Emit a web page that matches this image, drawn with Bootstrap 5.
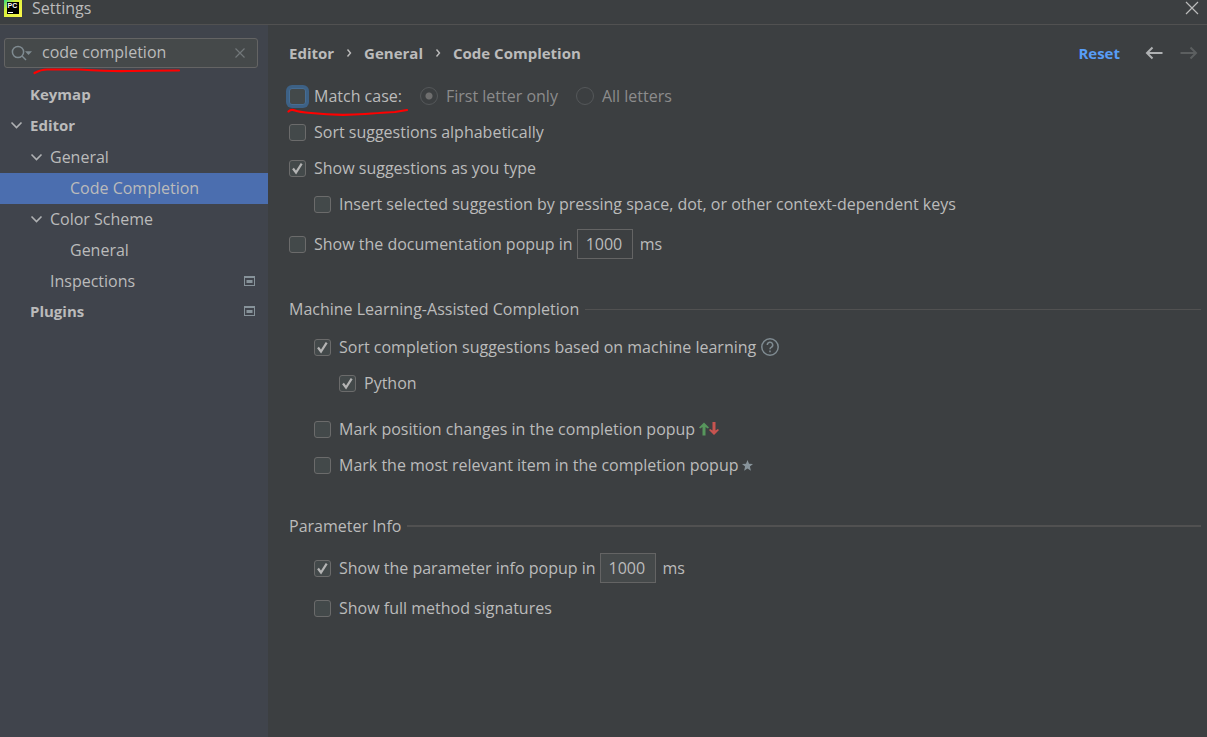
<!DOCTYPE html>
<html lang="en" data-bs-theme="dark">
<head>
<meta charset="utf-8">
<meta name="viewport" content="width=device-width, initial-scale=1">
<title>Settings</title>
<link href="https://cdn.jsdelivr.net/npm/bootstrap@5.3.0/dist/css/bootstrap.min.css" rel="stylesheet">
<style>
  :root { --ink: #bbbbbb; --panel: #3c3f41; --side: #40444c; --field: #45494a; --line: #515151; --edge: #646464; }
  body { background: var(--panel); color: var(--ink); font-family: "Open Sans", "Noto Sans", sans-serif; font-size: 16px; line-height: 22px; }
  a { color: inherit; text-decoration: none; }
  svg { display: block; flex: none; }
  .fw-bold { font-size: 15px; }

  .titlebar { height: 25px; border-bottom: 1px solid var(--line); padding: 0 8px 8px 4px; gap: 10px; line-height: 16px; }
  .icon-btn { background: none; border: 0; padding: 0; color: inherit; }

  .sidebar { width: 268px; background: var(--side); padding-top: 13px; }
  .search { height: 30px; margin: 0 10px 12px 4px; padding: 0 11px 0 6px; background: var(--field); border: 1px solid var(--edge); border-radius: 3px; }
  .search input { background: none; border: 0; outline: 0; padding: 0 0 2px 1px; color: var(--ink); min-width: 0; }
  .tree-row { height: 31px; padding: 0 13px 2px 10px; gap: 7px; }
  .tree-row.fw-bold { padding-bottom: 4px; }
  .tree-row.level-2 { padding-left: 30px; }
  .tree-row.level-3 { padding-left: 50px; }
  .tree-row.selected { background: #4b6eaf; }
  .twig { width: 13px; flex: none; }

  .content-pane { padding: 12px 6px 0 21px; }
  .crumbs { height: 32px; }
  .page-head { padding-right: 3px; margin-bottom: 9px; }
  .crumbs svg { margin: 0 12px; }
  .reset { color: #589df6; }

  .opt { height: 36px; }
  .opt.tall { height: 44px; }
  .indent-1 { padding-left: 25px; }
  .indent-2 { padding-left: 50px; }
  .opt label { margin-left: 8px; }
  .radio-pair { margin-left: 18px; }
  .opt .form-check-input { width: 17px; height: 17px; margin: 0; flex: none; background-color: #43494a; border: 1px solid #6b6b6b; border-radius: 3px; opacity: 1; }
  .opt .form-check-input[type=checkbox]:checked { background-size: 17px 17px; background-image: url("data:image/svg+xml,%3Csvg xmlns='http://www.w3.org/2000/svg' viewBox='0 0 17 17'%3E%3Cpath d='M4 8.5l3 4L12.7 3.6' fill='none' stroke='%23b4b4b4' stroke-width='2.2'/%3E%3C/svg%3E"); }
  .opt .form-check-input:focus { border-color: #466d94; box-shadow: 0 0 0 3px #3d6185; }
  .opt .form-check-input[type=radio] { width: 18px; height: 18px; border-color: #55585a; background-color: var(--panel); border-radius: 50%; }
  .opt .form-check-input[type=radio]:checked { background-image: radial-gradient(circle, #6e6e6e 3px, transparent 4px); }
  .opt .form-check-input:disabled ~ label { opacity: 1; color: #8c8c8c; }
  .ms-field { width: 56px; height: 30px; margin: 0 7px 0 4px; padding: 0 0 0 8px; background: var(--panel); border: 1px solid var(--edge); border-radius: 0; color: var(--ink); }
  .ms-field.live { background: var(--field); }
  .section-title { height: 30px; gap: 6px; }
  .section-title h2 { font-size: 16px; line-height: 22px; font-weight: 400; margin: 0; color: var(--ink); }
  .rule { height: 1px; background: var(--line); }
  .rule.thick { height: 2px; }
  .group-body { padding-top: 5px; }
  .marks { padding-top: 10px; }
  .scribble { position: absolute; pointer-events: none; }
</style>
</head>
<body class="d-flex flex-column min-vh-100">
<header class="titlebar d-flex align-items-center">
  <svg width="18" height="18" viewBox="0 0 18 18" aria-hidden="true">
    <defs><linearGradient id="pc" x1="0" y1="0" x2="1" y2="1"><stop offset="0" stop-color="#21d789"/><stop offset=".35" stop-color="#d8f03c"/><stop offset="1" stop-color="#fcf84a"/></linearGradient></defs>
    <rect width="18" height="18" fill="url(#pc)"/><rect x="3" y="3" width="12" height="12" fill="#000"/>
    <text x="3.5" y="9" font-family="Liberation Sans" font-weight="700" font-size="7" fill="#fff">PC</text><rect x="4" y="13" width="5" height="1" fill="#fff"/>
  </svg>
  <span>Settings</span>
  <button class="icon-btn ms-auto" aria-label="Close"><svg width="14" height="14" viewBox="0 0 14 14" stroke="#bbb" stroke-width="1.2"><path d="M1 1l12 12M13 1L1 13"/></svg></button>
</header>

<div class="d-flex flex-grow-1">
  <aside class="sidebar flex-shrink-0">
    <div class="search d-flex align-items-center position-relative">
      <svg width="22" height="18" viewBox="0 0 22 18" fill="none" stroke="#7f8b91" stroke-width="1.5"><circle cx="7" cy="8" r="5.6"/><path d="M11 12l4 4"/><path d="M14 7.2h7L17.5 11z" fill="#7f8b91" stroke="none"/></svg>
      <input class="flex-grow-1 ms-2" type="text" value="code completion" aria-label="Search settings">
      <button class="icon-btn" aria-label="Clear"><svg width="12" height="12" viewBox="0 0 12 12" stroke="#72777a" stroke-width="1.2"><path d="M1.5 1.5l9 9M10.5 1.5l-9 9"/></svg></button>
      <svg class="scribble" style="left:28px;top:29px" width="150" height="8" viewBox="0 0 150 8" fill="none" stroke="#f00" stroke-width="2.2" stroke-linecap="round" stroke-linejoin="round"><path d="M1.5 5Q8 1.500 14 1.500L46 1.500Q80 3.500 95 3T146 2.500"/></svg>
    </div>
    <nav aria-label="Settings categories">
      <a href="#" class="tree-row d-flex align-items-center fw-bold"><span class="twig"></span>Keymap</a>
      <a href="#" class="tree-row d-flex align-items-center fw-bold"><svg class="twig" width="13" height="12" viewBox="0 0 13 12" fill="none" stroke="#afb1b3" stroke-width="1.6"><path d="M1.5 3.500l5 5 5-5"/></svg>Editor</a>
      <a href="#" class="tree-row level-2 d-flex align-items-center"><svg class="twig" width="13" height="12" viewBox="0 0 13 12" fill="none" stroke="#afb1b3" stroke-width="1.6"><path d="M1.5 3.500l5 5 5-5"/></svg>General</a>
      <a href="#" class="tree-row level-3 selected d-flex align-items-center" aria-current="page"><span class="twig"></span>Code Completion</a>
      <a href="#" class="tree-row level-2 d-flex align-items-center"><svg class="twig" width="13" height="12" viewBox="0 0 13 12" fill="none" stroke="#afb1b3" stroke-width="1.6"><path d="M1.5 3.500l5 5 5-5"/></svg>Color Scheme</a>
      <a href="#" class="tree-row level-3 d-flex align-items-center"><span class="twig"></span>General</a>
      <a href="#" class="tree-row level-2 d-flex align-items-center"><span class="twig"></span>Inspections<svg class="ms-auto" width="11" height="10" viewBox="0 0 11 10"><path fill="#87939a" fill-rule="evenodd" d="M0 0h11v10H0zM1 2v7h9V2zM2.500 4h6v3h-6z"/></svg></a>
      <a href="#" class="tree-row d-flex align-items-center fw-bold"><span class="twig"></span>Plugins<svg class="ms-auto" width="11" height="10" viewBox="0 0 11 10"><path fill="#87939a" fill-rule="evenodd" d="M0 0h11v10H0zM1 2v7h9V2zM2.500 4h6v3h-6z"/></svg></a>
    </nav>
  </aside>

  <main class="content-pane flex-grow-1">
    <div class="page-head d-flex align-items-center">
      <ol class="breadcrumb crumbs align-items-center fw-bold mb-0">
        <li><a href="#">Editor</a></li>
        <li aria-hidden="true"><svg width="6" height="10" viewBox="0 0 6 10" fill="none" stroke="#bbb" stroke-width="1.4"><path d="M1.5 1.500L4.500 5l-3 3.500"/></svg></li>
        <li><a href="#">General</a></li>
        <li aria-hidden="true"><svg width="6" height="10" viewBox="0 0 6 10" fill="none" stroke="#bbb" stroke-width="1.4"><path d="M1.5 1.500L4.500 5l-3 3.500"/></svg></li>
        <li aria-current="page">Code Completion</li>
      </ol>
      <a href="#" class="reset fw-bold ms-auto">Reset</a>
      <button class="icon-btn ms-4" aria-label="Back"><svg width="20" height="14" viewBox="0 0 20 14" fill="none" stroke="#afb1b3" stroke-width="2"><path d="M18.500 7H3M8.500 1.500L3 7l5.500 5.500"/></svg></button>
      <button class="icon-btn ms-3" aria-label="Forward" disabled><svg width="18" height="14" viewBox="0 0 18 14" fill="none" stroke="#5c5f60" stroke-width="2"><path d="M0.500 7h15M10.500 1.500L16 7l-5.500 5.500"/></svg></button>
    </div>

    <form>
      <div class="opt d-flex align-items-center position-relative">
        <input class="form-check-input" type="checkbox" id="matchCase" autofocus><label for="matchCase">Match case:</label>
        <div class="radio-pair d-flex align-items-center"><input class="form-check-input" type="radio" name="case" id="first" checked disabled><label for="first">First letter only</label></div>
        <div class="radio-pair d-flex align-items-center"><input class="form-check-input" type="radio" name="case" id="all" disabled><label for="all">All letters</label></div>
        <svg class="scribble" style="left:-2px;top:30px" width="122" height="10" viewBox="0 0 122 10" fill="none" stroke="#f00" stroke-width="2.2" stroke-linecap="round" stroke-linejoin="round"><path d="M1.5 3.500Q4 1 8 2.500T24 5Q50 8 78 6T108 4L120 2"/></svg>
      </div>
      <div class="opt d-flex align-items-center"><input class="form-check-input" type="checkbox" id="alpha"><label for="alpha">Sort suggestions alphabetically</label></div>
      <div class="opt d-flex align-items-center"><input class="form-check-input" type="checkbox" id="asType" checked><label for="asType">Show suggestions as you type</label></div>
      <div class="opt indent-1 d-flex align-items-center"><input class="form-check-input" type="checkbox" id="insert"><label for="insert">Insert selected suggestion by pressing space, dot, or other context-dependent keys</label></div>
      <div class="opt tall d-flex align-items-center"><input class="form-check-input" type="checkbox" id="doc"><label for="doc">Show the documentation popup in</label><input class="ms-field" type="text" value="1000" aria-label="Documentation popup delay">ms</div>

      <section class="pt-4 mt-1">
        <div class="section-title d-flex align-items-center"><h2>Machine Learning-Assisted Completion</h2><span class="rule flex-grow-1"></span></div>
        <div class="group-body">
          <div class="opt indent-1 d-flex align-items-center"><input class="form-check-input" type="checkbox" id="ml" checked><label for="ml">Sort completion suggestions based on machine learning</label>
            <svg class="ms-1" width="20" height="20" viewBox="0 0 20 20" fill="none" stroke="#7f8b91" stroke-width="1.5"><circle cx="10" cy="10" r="8.2"/><path d="M7.300 8a2.700 2.700 0 1 1 4 2.300Q10 11 10 12.200M10 13.600v1.600"/></svg></div>
          <div class="opt indent-2 d-flex align-items-center"><input class="form-check-input" type="checkbox" id="py" checked><label for="py">Python</label></div>
        </div>
        <div class="marks">
          <div class="opt indent-1 d-flex align-items-center"><input class="form-check-input" type="checkbox" id="pos"><label for="pos">Mark position changes in the completion popup</label>
            <svg class="ms-1" width="20" height="14" viewBox="0 0 20 14"><path fill="#57965c" d="M5 .5l5 5L8.800 6.500 6.500 5v8.500h-3V5L1.200 6.500 0 5.500z"/><path fill="#c75450" d="M15 13l-5-5 1.200-1L13.500 8.500V0h3v8.500L18.800 7 20 8z"/></svg></div>
          <div class="opt indent-1 d-flex align-items-center"><input class="form-check-input" type="checkbox" id="rel"><label for="rel">Mark the most relevant item in the completion popup</label>
            <svg class="ms-1" width="11" height="11" viewBox="0 0 11 11"><path fill="#87939a" d="M5.500 0l1.500 3.800 4 .2-3.100 2.600 1 4.200-3.400-2.300-3.400 2.300 1-4.200L0 4l4-.2z"/></svg></div>
        </div>
      </section>

      <section class="pt-4 mt-1">
        <div class="section-title d-flex align-items-center"><h2>Parameter Info</h2><span class="rule thick flex-grow-1"></span></div>
        <div class="group-body">
          <div class="opt tall indent-1 d-flex align-items-center"><input class="form-check-input" type="checkbox" id="param" checked><label for="param">Show the parameter info popup in</label><input class="ms-field live" type="text" value="1000" aria-label="Parameter info popup delay">ms</div>
          <div class="opt indent-1 d-flex align-items-center"><input class="form-check-input" type="checkbox" id="sig"><label for="sig">Show full method signatures</label></div>
        </div>
      </section>
    </form>
  </main>
</div>
<script src="https://cdn.jsdelivr.net/npm/bootstrap@5.3.0/dist/js/bootstrap.bundle.min.js"></script>
</body>
</html>
